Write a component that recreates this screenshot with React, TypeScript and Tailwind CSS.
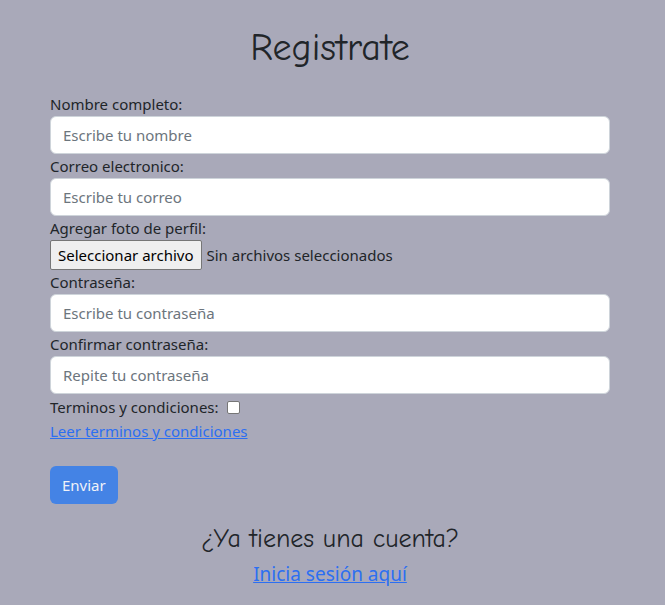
import React from "react";

const body = { fontFamily: '"Noto Sans", "Segoe UI", sans-serif' };
const comic = { fontFamily: '"Comic Sans MS", "Comic Neue", "DejaVu Sans", sans-serif' };

function Field({ label, placeholder }: { label: string; placeholder: string }) {
  return (
    <div className="flex flex-col">
      <label className="text-[15px] leading-[24px] text-[#212529]">{label}</label>
      <input
        placeholder={placeholder}
        className="h-[38px] w-full rounded-[6px] border border-[#ced4da] bg-white px-[12px] text-[15px] text-[#212529] placeholder:text-[#6c757d] outline-none"
        style={body}
      />
    </div>
  );
}

export default function App() {
  return (
    <div className="min-h-[605px] w-full bg-[#a9a9b9]" style={body}>
      <div className="ml-[50px] w-[560px] pt-[24px]">
        <h1 className="text-center text-[38px] leading-[48px] text-[#212529]" style={comic}>
          Registrate
        </h1>
        <form className="mt-[20px] flex flex-col">
          <Field label="Nombre completo:" placeholder="Escribe tu nombre" />
          <Field label="Correo electronico:" placeholder="Escribe tu correo" />
          <div className="flex flex-col">
            <label className="text-[15px] leading-[24px] text-[#212529]">Agregar foto de perfil:</label>
            <div className="flex items-center gap-[5px] h-[30px]">
              <span className="h-[30px] rounded-[2px] border border-[#767676] bg-[#efefef] px-[7px] text-[15px] leading-[28px] text-black">
                Seleccionar archivo
              </span>
              <span className="text-[15px] text-[#212529]">Sin archivos seleccionados</span>
            </div>
          </div>
          <Field label="Contraseña:" placeholder="Escribe tu contraseña" />
          <Field label="Confirmar contraseña:" placeholder="Repite tu contraseña" />
          <div className="flex items-center h-[26px] text-[15px] text-[#212529]">
            <span>Terminos y condiciones:</span>
            <span className="ml-[8px] inline-block h-[13px] w-[13px] rounded-[2px] border border-[#767676] bg-white" />
          </div>
          <div className="h-[22px] leading-[22px]">
            <a href="#" className="text-[15px] text-[#2c6ff2] underline">
              Leer terminos y condiciones
            </a>
          </div>
          <div className="mt-[24px]">
            <button
              type="button"
              className="h-[38px] rounded-[6px] bg-[#4483e5] px-[12px] text-[15px] text-[#f0f2f8]"
              style={body}
            >
              Enviar
            </button>
          </div>
        </form>
        <div className="mt-[17px] text-center text-[26px] leading-[36px] text-[#212529]" style={comic}>
          ¿Ya tienes una cuenta?
        </div>
        <div className="text-center leading-[34px]">
          <a href="#" className="text-[19px] text-[#2c6ff2] underline">
            Inicia sesión aquí
          </a>
        </div>
      </div>
    </div>
  );
}
